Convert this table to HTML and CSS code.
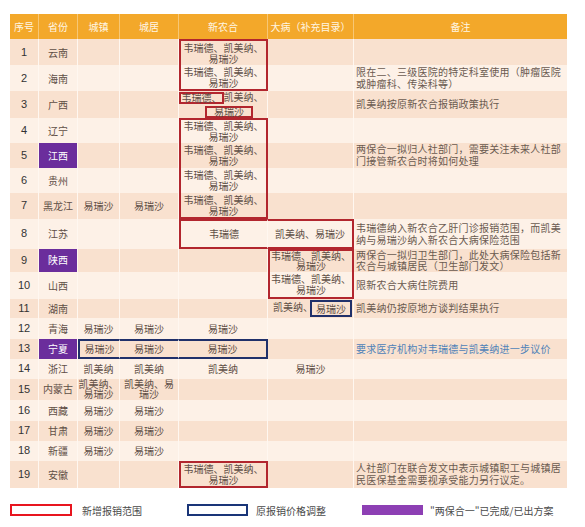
FILE: index.html
```html
<!DOCTYPE html>
<html lang="zh-CN">
<head>
<meta charset="utf-8">
<title>报销范围</title>
<link rel="stylesheet" href="styles.css">
</head>
<body>
<div class="page">
  <table class="grid">
    <colgroup>
      <col class="c-no"><col class="c-prov"><col class="c-town"><col class="c-res"><col class="c-ncms"><col class="c-ill"><col class="c-note">
    </colgroup>
    <thead>
      <tr><th>序号</th><th>省份</th><th>城镇</th><th>城居</th><th>新农合</th><th>大病（补充目录）</th><th>备注</th></tr>
    </thead>
    <tbody>
      <tr class="h26"><td class="no">1</td><td>云南</td><td></td><td></td><td class="r-t r-l r-r">韦瑞德、凯美纳、易瑞沙</td><td></td><td class="note"></td></tr>
      <tr class="h26"><td class="no">2</td><td>海南</td><td></td><td></td><td class="r-b r-l r-r">韦瑞德、凯美纳、易瑞沙</td><td></td><td class="note">限在二、三级医院的特定科室使用（肿瘤医院或肿瘤科、传染科等）</td></tr>
      <tr class="h25"><td class="no">3</td><td>广西</td><td></td><td></td><td class="split"><span class="mark-r first">韦瑞德、</span>凯美纳、<br><span class="mark-r second">易瑞沙</span></td><td></td><td class="note">凯美纳按原新农合报销政策执行</td></tr>
      <tr class="h25"><td class="no">4</td><td>辽宁</td><td></td><td></td><td class="r-t r-l r-r">韦瑞德、凯美纳、易瑞沙</td><td></td><td class="note"></td></tr>
      <tr class="h25"><td class="no">5</td><td class="done">江西</td><td></td><td></td><td class="r-l r-r">韦瑞德、凯美纳、易瑞沙</td><td></td><td class="note">两保合一拟归人社部门，需要关注未来人社部门接管新农合时将如何处理</td></tr>
      <tr class="h25"><td class="no">6</td><td>贵州</td><td></td><td></td><td class="r-l r-r">韦瑞德、凯美纳、易瑞沙</td><td></td><td class="note"></td></tr>
      <tr class="h26"><td class="no">7</td><td>黑龙江</td><td>易瑞沙</td><td>易瑞沙</td><td class="r-b r-l r-r">韦瑞德、凯美纳、易瑞沙</td><td></td><td class="note"></td></tr>
      <tr class="h30"><td class="no">8</td><td>江苏</td><td></td><td></td><td class="r-t r-b r-l">韦瑞德</td><td class="r-t r-b r-r">凯美纳、易瑞沙</td><td class="note">韦瑞德纳入新农合乙肝门诊报销范围，而凯美纳与易瑞沙纳入新农合大病保险范围</td></tr>
      <tr class="h23 snug"><td class="no">9</td><td class="done">陕西</td><td></td><td></td><td></td><td class="r-t r-l r-r">韦瑞德、凯美纳、易瑞沙</td><td class="note">两保合一拟归卫生部门，此处大病保险包括新农合与城镇居民（卫生部门发文）</td></tr>
      <tr class="h27"><td class="no">10</td><td>山西</td><td></td><td></td><td></td><td class="r-b r-l r-r">韦瑞德、凯美纳、易瑞沙</td><td class="note">限新农合大病住院费用</td></tr>
      <tr class="h19"><td class="no">11</td><td>湖南</td><td></td><td></td><td></td><td class="pair">凯美纳、<span class="mark-n">易瑞沙</span></td><td class="note">凯美纳仍按原地方谈判结果执行</td></tr>
      <tr class="h21"><td class="no">12</td><td>青海</td><td>易瑞沙</td><td>易瑞沙</td><td>易瑞沙</td><td></td><td class="note"></td></tr>
      <tr class="h20"><td class="no">13</td><td class="done">宁夏</td><td class="n-t n-b n-l">易瑞沙</td><td class="n-t n-b">易瑞沙</td><td class="n-t n-b n-r">易瑞沙</td><td></td><td class="note blue">要求医疗机构对韦瑞德与凯美纳进一步议价</td></tr>
      <tr class="h20"><td class="no">14</td><td>浙江</td><td>凯美纳</td><td>凯美纳</td><td>凯美纳</td><td>易瑞沙</td><td class="note"></td></tr>
      <tr class="h21 snug"><td class="no">15</td><td>内蒙古</td><td>凯美纳、易瑞沙</td><td>凯美纳、易瑞沙</td><td></td><td></td><td class="note"></td></tr>
      <tr class="h21"><td class="no">16</td><td>西藏</td><td>易瑞沙</td><td>易瑞沙</td><td></td><td></td><td class="note"></td></tr>
      <tr class="h20"><td class="no">17</td><td>甘肃</td><td>易瑞沙</td><td>易瑞沙</td><td></td><td></td><td class="note"></td></tr>
      <tr class="h20"><td class="no">18</td><td>新疆</td><td>易瑞沙</td><td>易瑞沙</td><td></td><td></td><td class="note"></td></tr>
      <tr class="h27"><td class="no">19</td><td>安徽</td><td></td><td></td><td class="r-t r-b r-l r-r">韦瑞德、凯美纳、易瑞沙</td><td></td><td class="note">人社部门在联合发文中表示城镇职工与城镇居民医保基金需要视承受能力另行议定。</td></tr>
    </tbody>
  </table>

  <div class="legend">
    <div class="legend-item"><span class="swatch sw-red"></span><span>新增报销范围</span></div>
    <div class="legend-item"><span class="swatch sw-navy"></span><span>原报销价格调整</span></div>
    <div class="legend-item"><span class="swatch sw-purple"></span><span>"两保合一"已完成/已出方案</span></div>
  </div>
</div>
</body>
</html>
```

FILE: styles.css
```css
body {
  margin: 0;
  background: #ffffff;
  font-family: "Noto Sans CJK SC", "Noto Sans", sans-serif;
}

.page {
  padding: 14px 0 0 10px;
}

.grid {
  border-collapse: separate;
  border-spacing: 0;
  table-layout: fixed;
  width: 557px;
  font-size: 10px;
  line-height: 11px;
  color: #5f4f46;
}

.c-no { width: 29px; }
.c-prov { width: 39px; }
.c-town { width: 42px; }
.c-res { width: 59px; }
.c-ncms { width: 89px; }
.c-ill { width: 86px; }
.c-note { width: 213px; }

.grid th {
  height: 25px;
  padding: 0;
  background: #f3a82a;
  color: #fff6e4;
  font-weight: 400;
  font-size: 10px;
  border-right: 1px solid #f7c775;
  white-space: nowrap;
}

.grid th:last-child { border-right: 0; }

.grid td {
  padding: 0;
  text-align: center;
  vertical-align: middle;
  border-right: 1px solid #fff7f0;
}

.grid td:last-child { border-right: 0; }

.grid tbody tr:nth-child(odd) td { background: #f9e1cf; }
.grid tbody tr:nth-child(even) td { background: #fdf1e7; }

.h19 { height: 19px; }
.h20 { height: 20px; }
.h21 { height: 21px; }
.h23 { height: 23px; }
.h25 { height: 25px; }
.h26 { height: 26px; }
.h27 { height: 27px; }
.h30 { height: 30px; }

.grid .snug td { line-height: 10.5px; }

.grid td.no {
  font-family: "Liberation Sans", Arial, sans-serif;
  font-size: 11px;
  color: #333333;
}

.grid td.note {
  text-align: left;
  padding-left: 2px;
  letter-spacing: 0.25px;
  line-height: 12px;
  color: #6a5a50;
}

.grid .snug td.note { line-height: 11px; }

.grid td.blue { color: #4f82b8; }

.grid tbody tr td.done {
  background: #6b2d9c;
  color: #ffffff;
}

/* red "newly reimbursed" frames */
.grid td.r-t { border-top: 2px solid #b2262e; }
.grid td.r-b { border-bottom: 2px solid #b2262e; }
.grid td.r-l { border-left: 2px solid #b2262e; }
.grid td.r-r { border-right: 2px solid #b2262e; }

/* navy "price adjusted" frames */
.grid td.n-t { border-top: 2px solid #20306a; }
.grid td.n-b { border-bottom: 2px solid #20306a; }
.grid td.n-l { border-left: 2px solid #20306a; }
.grid td.n-r { border-right: 2px solid #20306a; }

.mark-r {
  display: inline-block;
  border: 2px solid #b2262e;
  line-height: 8px;
  vertical-align: middle;
}

.split { white-space: nowrap; line-height: 11px; }
.split .first { margin-left: -4px; padding: 0 0 0 1px; }
.split .second { padding: 0 7px; margin-left: 12px; }

.pair { white-space: nowrap; }

.mark-n {
  display: inline-block;
  border: 2px solid #20306a;
  line-height: 13px;
  padding: 0 4px;
  margin-left: -3px;
  margin-right: -4px;
  vertical-align: middle;
}

.legend {
  display: flex;
  align-items: center;
  margin-top: 15px;
  font-size: 10px;
  color: #4a4a4a;
}

.legend-item {
  display: flex;
  align-items: center;
  gap: 8px;
  width: 175px;
}

.legend-item:first-child { gap: 10px; width: 177px; }
.legend-item:last-child { gap: 7px; width: auto; }

.swatch {
  display: block;
  width: 62px;
  box-sizing: border-box;
}

.sw-red {
  height: 12px;
  border: 2px solid #e8151f;
}

.sw-navy {
  width: 61px;
  height: 12px;
  border: 2px solid #1a3578;
}

.sw-purple {
  width: 61px;
  height: 10px;
  background: #8d3fb4;
}
```
